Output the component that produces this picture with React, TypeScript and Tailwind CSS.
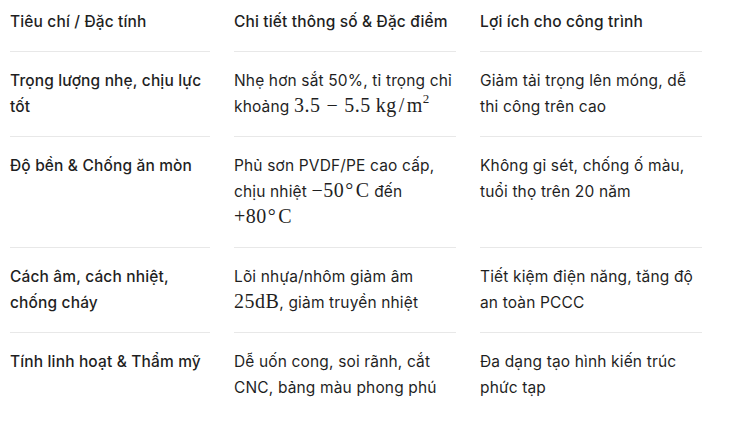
const M = ({ children }: { children: React.ReactNode }) => (
  <span
    className="text-[20px] leading-none tracking-[0.5px]"
    style={{ fontFamily: '"Liberation Serif", "DejaVu Serif", serif' }}
  >
    {children}
  </span>
)

const Minus = () => <span className="mx-[6px]">−</span>
const Deg = () => <span className="ml-[1px] mr-[2px]">°</span>

const rows: { title: React.ReactNode; detail: React.ReactNode; benefit: React.ReactNode }[] = [
  {
    title: "Trọng lượng nhẹ, chịu lực tốt",
    detail: (
      <>
        Nhẹ hơn sắt 50%, tỉ trọng chỉ khoảng{" "}
        <M>
          3.5<Minus />5.5<span className="ml-[5px]">kg<span className="mx-[2px]">/</span>m</span>
          <span className="text-[13px] relative -top-[9px]">2</span>
        </M>
      </>
    ),
    benefit: "Giảm tải trọng lên móng, dễ thi công trên cao",
  },
  {
    title: "Độ bền & Chống ăn mòn",
    detail: (
      <>
        Phủ sơn PVDF/PE cao cấp, chịu nhiệt{" "}
        <M>
          −50<Deg />C
        </M>{" "}
        đến{" "}
        <M>
          +80<Deg />C
        </M>
      </>
    ),
    benefit: "Không gỉ sét, chống ố màu, tuổi thọ trên 20 năm",
  },
  {
    title: "Cách âm, cách nhiệt, chống cháy",
    detail: (
      <>
        Lõi nhựa/nhôm giảm âm <M>25dB</M>, giảm truyền nhiệt
      </>
    ),
    benefit: "Tiết kiệm điện năng, tăng độ an toàn PCCC",
  },
  {
    title: "Tính linh hoạt & Thẩm mỹ",
    detail: "Dễ uốn cong, soi rãnh, cắt CNC, bảng màu phong phú",
    benefit: "Đa dạng tạo hình kiến trúc phức tạp",
  },
]

export default function App() {
  return (
    <div
      className="min-h-screen bg-white px-[10px] text-[15.5px] leading-[26px] tracking-[0.15px] text-[#1f1f1f]"
      style={{ fontFamily: 'Inter, "Noto Sans", sans-serif' }}
    >
      <div className="grid grid-cols-[200px_222px_222px] gap-x-6">
        <div className="pt-[9px] pb-4 border-b border-[#e8e8e8] font-medium">Tiêu chí / Đặc tính</div>
        <div className="pt-[9px] pb-4 border-b border-[#e8e8e8] font-medium">Chi tiết thông số &amp; Đặc điểm</div>
        <div className="pt-[9px] pb-4 border-b border-[#e8e8e8] font-medium">Lợi ích cho công trình</div>
        {rows.map((r, i) => {
          const b = i < rows.length - 1 ? "border-b border-[#e8e8e8]" : ""
          return (
            <div key={i} className="contents">
              <div className={`py-4 font-medium ${b}`}>{r.title}</div>
              <div className={`py-4 ${b}`}>{r.detail}</div>
              <div className={`py-4 ${b}`}>{r.benefit}</div>
            </div>
          )
        })}
      </div>
    </div>
  )
}
